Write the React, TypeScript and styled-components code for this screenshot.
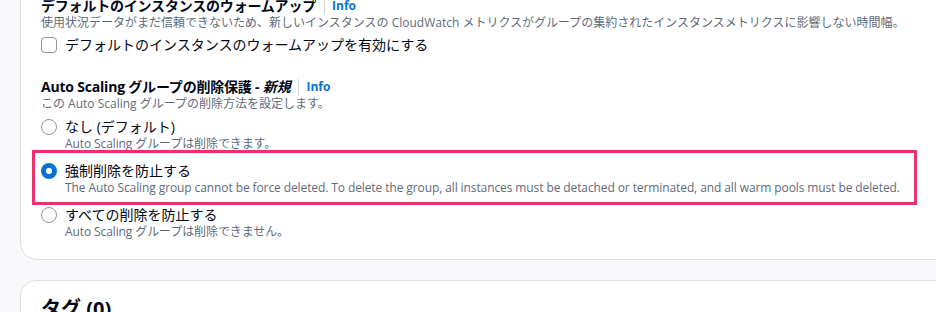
import React from 'react';
import styled, { createGlobalStyle } from 'styled-components';

const GlobalStyle = createGlobalStyle`
  body {
    margin: 0;
    background: #f8f8fa;
    overflow: hidden;
    font-family: "Open Sans", "Noto Sans CJK JP", sans-serif;
    color: #000716;
  }
`;

const Page = styled.div`
  display: flex;
  flex-direction: column;
  gap: 20px;
  padding-left: 20px;
`;

const Card = styled.section<{ $clipTop?: boolean }>`
  width: 1000px;
  background: #ffffff;
  border: 1px solid #dcdfe4;
  border-radius: 16px;
  padding: 16px 20px 20px;
  margin-top: ${(p) => (p.$clipTop ? '-20px' : '0')};
`;

const CardTitle = styled.h2`
  margin: 0;
  font-size: 20px;
  line-height: 24px;
  font-weight: 700;
`;

const Field = styled.div<{ $spaced?: boolean }>`
  display: flex;
  flex-direction: column;
  margin-top: ${(p) => (p.$spaced ? '22px' : '0')};
`;

const FieldHeader = styled.div`
  display: flex;
  align-items: center;
  font-size: 14px;
  line-height: 18px;
  font-weight: 700;
  letter-spacing: -0.2px;
`;

const Divider = styled.span`
  width: 1px;
  height: 16px;
  background: #d1d5db;
  margin: 0 7px 0 8px;
`;

const InfoLink = styled.a`
  font-size: 12px;
  font-weight: 700;
  letter-spacing: 0;
  color: #0972d3;
  text-decoration: none;
`;

const Description = styled.div`
  font-size: 12px;
  line-height: 16px;
  color: #5f6b7a;
`;

const CheckRow = styled.label`
  display: flex;
  align-items: center;
  gap: 8px;
  margin-top: 3px;
  font-size: 14px;
  line-height: 22px;
`;

const CheckBox = styled.span`
  width: 16px;
  height: 16px;
  box-sizing: border-box;
  border: 1.5px solid #8c95a1;
  border-radius: 4px;
  background: #fff;
`;

const RadioGroup = styled.div`
  display: flex;
  flex-direction: column;
  gap: 10px;
  margin-top: 5px;
`;

const RadioItem = styled.div<{ $highlight?: boolean }>`
  position: relative;
  display: grid;
  grid-template-columns: 16px auto;
  column-gap: 8px;

  &::after {
    content: '';
    display: ${(p) => (p.$highlight ? 'block' : 'none')};
    position: absolute;
    left: -9px;
    top: -11px;
    bottom: -10px;
    width: 885px;
    box-sizing: border-box;
    border: 3px solid #e8336c;
    pointer-events: none;
  }
`;

const RadioDot = styled.span<{ $checked?: boolean }>`
  width: 16px;
  height: 16px;
  box-sizing: border-box;
  margin-top: 2px;
  border-radius: 50%;
  background: #fff;
  border: ${(p) => (p.$checked ? '5px solid #0972d3' : '1.5px solid #8c95a1')};
`;

const RadioLabel = styled.span`
  font-size: 14px;
  line-height: 20px;
`;

const RadioDesc = styled.span`
  grid-column: 2;
  font-size: 12px;
  line-height: 14px;
  letter-spacing: -0.1px;
  color: #5f6b7a;
`;

const options = [
  { label: 'なし (デフォルト)', desc: 'Auto Scaling グループは削除できます。' },
  {
    label: '強制削除を防止する',
    desc: 'The Auto Scaling group cannot be force deleted. To delete the group, all instances must be detached or terminated, and all warm pools must be deleted.',
  },
  { label: 'すべての削除を防止する', desc: 'Auto Scaling グループは削除できません。' },
];

export default function App() {
  const selected = 1;
  return (
    <>
      <GlobalStyle />
      <Page>
        <Card $clipTop>
          <Field>
            <FieldHeader>
              デフォルトのインスタンスのウォームアップ
              <Divider />
              <InfoLink>Info</InfoLink>
            </FieldHeader>
            <Description>
              使用状況データがまだ信頼できないため、新しいインスタンスの CloudWatch
              メトリクスがグループの集約されたインスタンスメトリクスに影響しない時間幅。
            </Description>
            <CheckRow>
              <CheckBox />
              デフォルトのインスタンスのウォームアップを有効にする
            </CheckRow>
          </Field>

          <Field $spaced>
            <FieldHeader>
              <span>
                Auto Scaling グループの削除保護 - <i>新規</i>
              </span>
              <Divider />
              <InfoLink>Info</InfoLink>
            </FieldHeader>
            <Description>この Auto Scaling グループの削除方法を設定します。</Description>
            <RadioGroup>
              {options.map((o, i) => (
                <RadioItem key={o.label} $highlight={i === selected}>
                  <RadioDot $checked={i === selected} />
                  <RadioLabel>{o.label}</RadioLabel>
                  <RadioDesc>{o.desc}</RadioDesc>
                </RadioItem>
              ))}
            </RadioGroup>
          </Field>
        </Card>

        <Card>
          <CardTitle>タグ (0)</CardTitle>
        </Card>
      </Page>
    </>
  );
}
